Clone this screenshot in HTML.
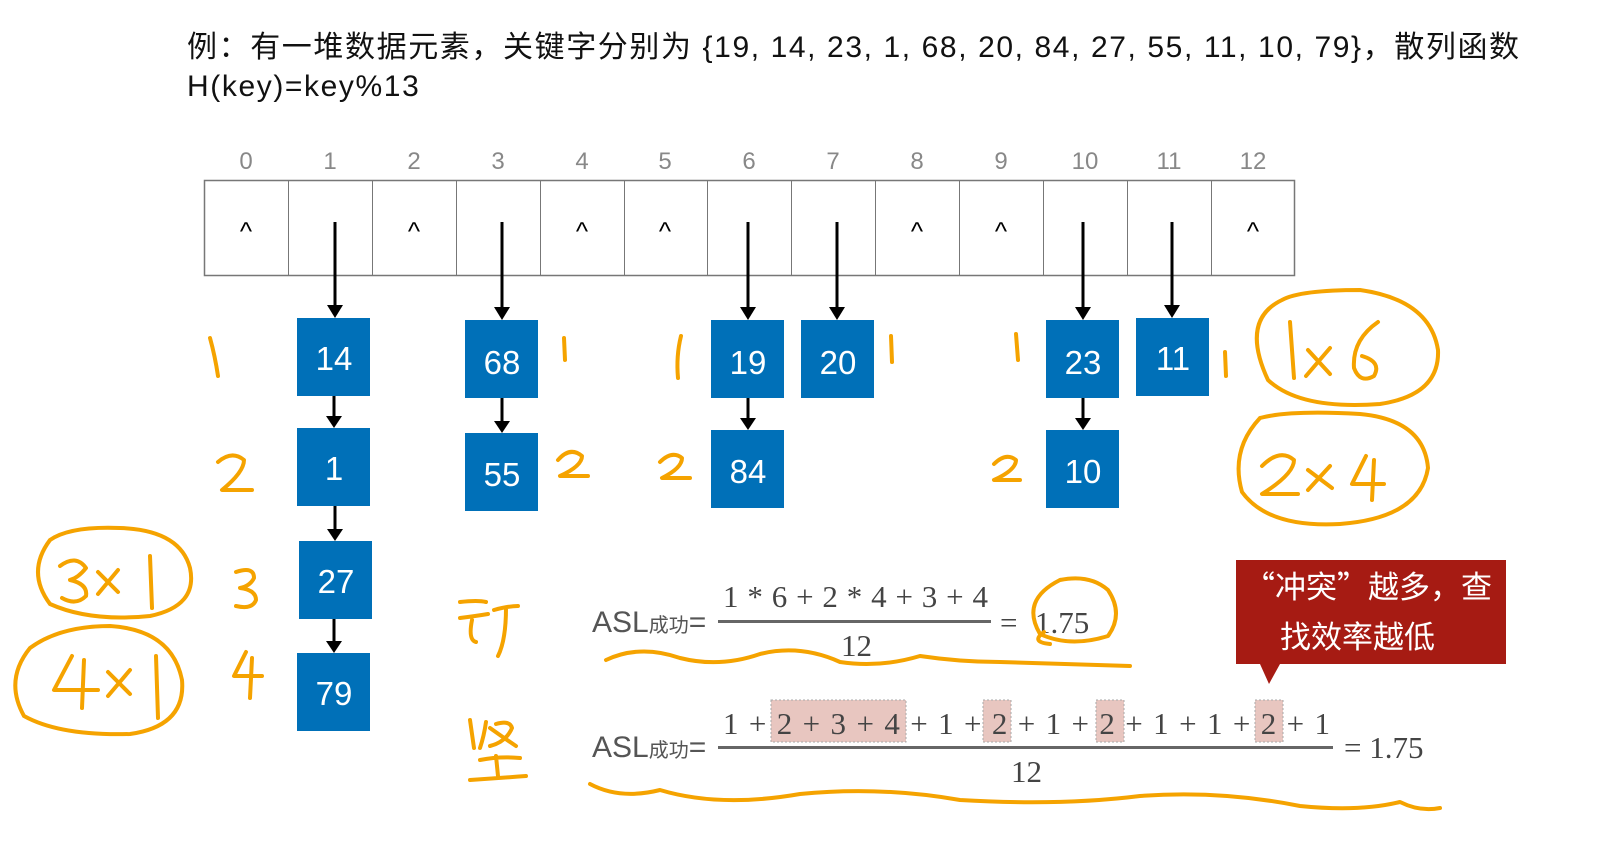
<!DOCTYPE html>
<html><head><meta charset="utf-8"><style>
html,body{margin:0;padding:0;background:#fff;}
body{width:1607px;height:861px;overflow:hidden;position:relative;font-family:"Liberation Sans","Noto Sans CJK SC",sans-serif;}
.t{position:absolute;left:187px;font-size:30px;color:#111;white-space:nowrap;letter-spacing:1.6px;}
svg{position:absolute;left:0;top:0;}
</style></head><body>
<div class="t" style="top:22px">例：有一堆数据元素，关键字分别为 {19, 14, 23, 1, 68, 20, 84, 27, 55, 11, 10, 79}，散列函数</div>
<div class="t" style="top:70px">H(key)=key%13</div>
<svg width="1607" height="861" viewBox="0 0 1607 861">
<g font-family="Liberation Sans" font-size="24" fill="#888" text-anchor="middle">
<text x="246" y="169">0</text><text x="330" y="169">1</text><text x="414" y="169">2</text><text x="498" y="169">3</text><text x="582" y="169">4</text><text x="665" y="169">5</text><text x="749" y="169">6</text><text x="833" y="169">7</text><text x="917" y="169">8</text><text x="1001" y="169">9</text><text x="1085" y="169">10</text><text x="1169" y="169">11</text><text x="1253" y="169">12</text>
</g>
<rect x="204.5" y="180.5" width="1090" height="95" fill="none" stroke="#777" stroke-width="1.5"/>
<g stroke="#777" stroke-width="1">
<line x1="288.5" y1="180" x2="288.5" y2="276"/><line x1="372.5" y1="180" x2="372.5" y2="276"/><line x1="456.5" y1="180" x2="456.5" y2="276"/><line x1="540.5" y1="180" x2="540.5" y2="276"/><line x1="624.5" y1="180" x2="624.5" y2="276"/><line x1="707.5" y1="180" x2="707.5" y2="276"/><line x1="791.5" y1="180" x2="791.5" y2="276"/><line x1="875.5" y1="180" x2="875.5" y2="276"/><line x1="959.5" y1="180" x2="959.5" y2="276"/><line x1="1043.5" y1="180" x2="1043.5" y2="276"/><line x1="1127.5" y1="180" x2="1127.5" y2="276"/><line x1="1211.5" y1="180" x2="1211.5" y2="276"/>
</g>
<g font-family="Liberation Sans" font-size="26" fill="#000" text-anchor="middle">
<text x="246" y="240">^</text><text x="414" y="240">^</text><text x="582" y="240">^</text><text x="665" y="240">^</text><text x="917" y="240">^</text><text x="1001" y="240">^</text><text x="1253" y="240">^</text>
</g>
<g stroke="#000" stroke-width="3">
<path d="M335 222V309"/><path d="M502 222V311"/><path d="M748 222V311"/><path d="M837 222V311"/><path d="M1083 222V311"/><path d="M1172 222V309"/>
<path d="M334 396V419"/><path d="M335 506V532"/><path d="M334 619V644"/><path d="M502 398V424"/><path d="M748 398V421"/><path d="M1083 398V421"/>
</g>
<g fill="#000">
<path d="M327 305h16l-8 13z"/><path d="M494 307h16l-8 13z"/><path d="M740 307h16l-8 13z"/><path d="M829 307h16l-8 13z"/><path d="M1075 307h16l-8 13z"/><path d="M1164 305h16l-8 13z"/>
<path d="M326 416h16l-8 12z"/><path d="M327 529h16l-8 12z"/><path d="M326 641h16l-8 12z"/><path d="M494 421h16l-8 12z"/><path d="M740 418h16l-8 12z"/><path d="M1075 418h16l-8 12z"/>
</g>
<g fill="#0070b8">
<rect x="297" y="318" width="73" height="78"/><rect x="297" y="428" width="73" height="78"/><rect x="299" y="541" width="73" height="78"/><rect x="297" y="653" width="73" height="78"/>
<rect x="465" y="320" width="73" height="78"/><rect x="465" y="433" width="73" height="78"/>
<rect x="711" y="320" width="73" height="78"/><rect x="711" y="430" width="73" height="78"/><rect x="801" y="320" width="73" height="78"/>
<rect x="1046" y="320" width="73" height="78"/><rect x="1046" y="430" width="73" height="78"/><rect x="1136" y="318" width="73" height="78"/>
</g>
<g font-family="Liberation Sans" font-size="33" fill="#fff" text-anchor="middle">
<text x="334" y="370">14</text><text x="334" y="480">1</text><text x="336" y="593">27</text><text x="334" y="705">79</text>
<text x="502" y="374">68</text><text x="502" y="486">55</text>
<text x="748" y="374">19</text><text x="748" y="483">84</text><text x="838" y="374">20</text>
<text x="1083" y="374">23</text><text x="1083" y="483">10</text><text x="1173" y="370">11</text>
</g>
<g fill="#555">
<text x="592" y="632" font-family="Liberation Sans" font-size="30">ASL<tspan font-size="20" font-family="Noto Sans CJK SC">成功</tspan>=</text>
<text x="592" y="757" font-family="Liberation Sans" font-size="30">ASL<tspan font-size="20" font-family="Noto Sans CJK SC">成功</tspan>=</text>
</g>
<rect x="718" y="620" width="273" height="3" fill="#666"/>
<rect x="718" y="746" width="615" height="3" fill="#666"/>
<g fill="#e8c6c0" stroke="#aaa" stroke-dasharray="2 2">
<rect x="771" y="700" width="135" height="42"/><rect x="983" y="700" width="28" height="42"/><rect x="1096" y="700" width="28" height="42"/><rect x="1255" y="700" width="28" height="42"/>
</g>
<g font-family="Liberation Serif" font-size="31" fill="#444">
<text x="723" y="607" textLength="265" lengthAdjust="spacing">1 * 6 + 2 * 4 + 3 + 4</text>
<text x="841" y="656">12</text>
<text x="1000" y="633">=</text><text x="1035" y="633">1.75</text>
<text x="723" y="734" textLength="607" lengthAdjust="spacing">1 + 2 + 3 + 4 + 1 + 2 + 1 + 2 + 1 + 1 + 2 + 1</text>
<text x="1011" y="782">12</text>
<text x="1344" y="758">= 1.75</text>
</g>
<path d="M1236 560H1506V664H1280L1269 684L1260 664H1236Z" fill="#a61b13"/>
<g font-family="Noto Sans CJK SC" font-size="31" fill="#fff">
<text x="1244" y="598">“冲突”越多，查</text><text x="1280" y="648">找效率越低</text>
</g>
<g fill="none" stroke="#f5a300" stroke-width="4" stroke-linecap="round" stroke-linejoin="round">
<path d="M210 338Q215 356 218 376"/><path d="M564 338L565 360"/><path d="M681 336Q676 356 678 378"/><path d="M891 336L892 362"/><path d="M1016 334L1018 360"/><path d="M1225 352L1226 376"/>
<path d="M218 462Q232 450 244 460Q244 472 222 490H252"/><path d="M558 460Q570 446 582 456Q582 466 560 476H588"/><path d="M660 462Q672 450 682 458Q682 468 662 478H690"/><path d="M994 464Q1006 452 1016 460Q1016 470 994 480H1020"/>
<path d="M236 572Q254 566 254 578Q250 586 240 588Q256 590 256 600Q252 610 236 606"/>
<path d="M246 652L234 676H262M252 658L250 698"/>
<path d="M1282 300Q1240 320 1268 380Q1300 410 1380 404Q1440 395 1438 350Q1430 300 1360 290Q1300 290 1282 300"/>
<path d="M1290 322L1294 378M1308 350L1330 374M1330 348L1306 376M1378 322Q1352 340 1354 368Q1360 384 1374 376Q1382 362 1362 356"/>
<path d="M1260 418Q1230 450 1242 492Q1268 528 1340 524Q1420 518 1428 468Q1424 420 1360 414Q1290 410 1260 418"/>
<path d="M1262 466Q1280 448 1294 460Q1294 474 1262 494H1298M1308 470L1332 488M1330 466L1308 490M1366 456L1352 484H1384M1374 460L1372 500"/>
<path d="M50 540Q26 572 50 604Q90 622 150 616Q198 606 190 568Q180 530 120 528Q70 526 50 540"/>
<path d="M60 566Q76 554 86 568Q78 578 70 580Q88 584 86 596Q76 606 62 598M98 572L118 592M118 570L98 594M150 556L152 608"/>
<path d="M30 648Q4 680 24 716Q60 736 130 734Q186 726 182 680Q172 630 110 626Q60 626 30 648"/>
<path d="M72 656L54 690H98M84 660L82 708M108 672L130 694M130 670L108 696M156 656L158 718"/>
<path d="M1060 580Q1020 600 1040 634Q1070 648 1108 636Q1124 614 1108 590Q1090 574 1060 580M1044 632Q1030 642 1050 644"/>
<path d="M460 602Q478 600 486 602M460 618Q476 616 488 614M472 620Q468 640 476 642M494 610Q508 606 518 606M506 608Q506 640 498 656"/>
<path d="M470 720L474 748M486 722Q484 736 480 748M496 724Q510 720 512 728Q506 742 490 746M490 728Q504 738 516 746M480 760Q500 756 520 758M496 756L498 776M470 780Q500 778 526 776"/>
<path d="M606 660Q640 644 680 658Q720 668 760 654Q800 644 840 662Q880 668 920 656Q960 662 1000 662Q1060 664 1130 666"/>
<path d="M590 784Q620 800 660 790Q720 808 800 794Q880 786 960 800Q1060 806 1140 796Q1220 790 1300 806Q1360 812 1400 802Q1420 812 1440 808"/>
</g>
</svg>
</body></html>
